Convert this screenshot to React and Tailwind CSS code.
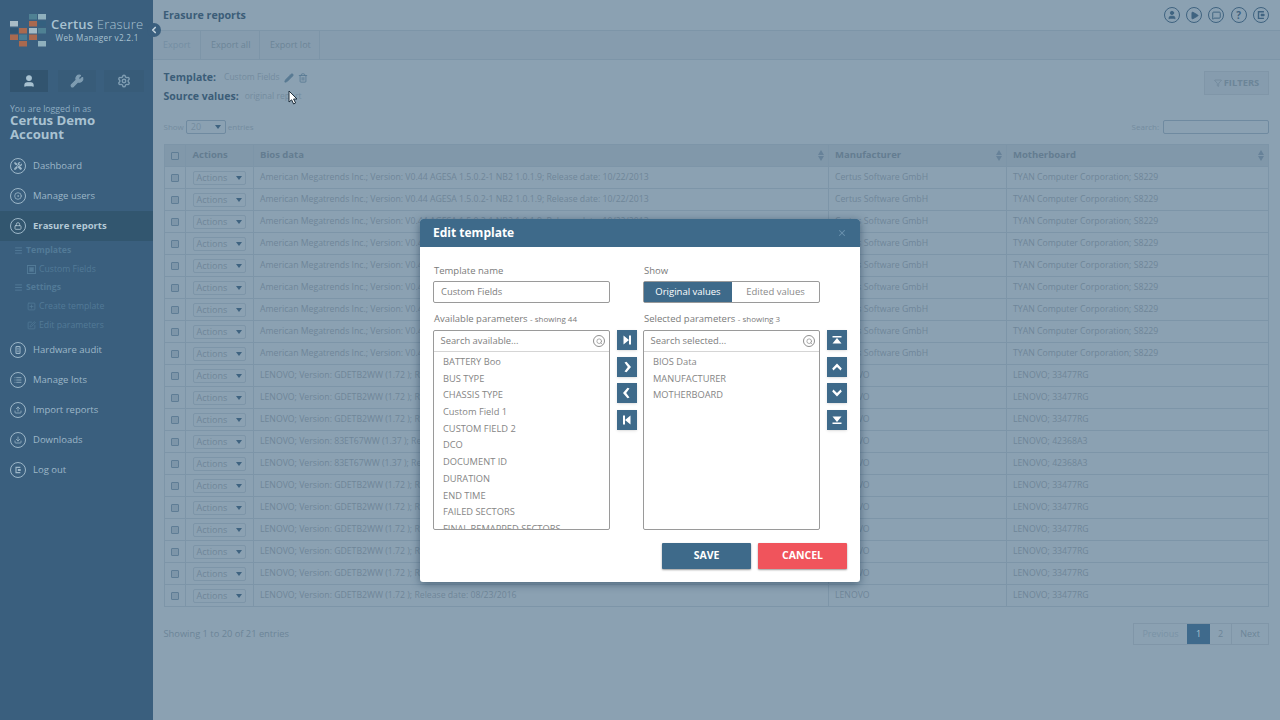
import React from 'react';
import {
  User, Wrench, Settings, CircleDot, Lock, List, Upload, Download, Pencil, Trash2,
  Menu, SquarePlus, SquarePen, Search, X, ChevronLeft, Play, MessageSquare, Filter,
} from 'lucide-react';
import { FaTools } from 'react-icons/fa';

const american = 'American Megatrends Inc.; Version: V0.44 AGESA 1.5.0.2-1 NB2 1.0.1.9; Release date: 10/22/2013';
const lenovo = 'LENOVO; Version: GDETB2WW (1.72 ); Release date: 08/23/2016';
const lenovo2 = 'LENOVO; Version: 83ET67WW (1.37 ); Release date: 08/23/2016';

const rows = [
  ...Array(9).fill({ bios: american, man: 'Certus Software GmbH', board: 'TYAN Computer Corporation; S8229' }),
  ...Array(3).fill({ bios: lenovo, man: 'LENOVO', board: 'LENOVO; 33477RG' }),
  ...Array(2).fill({ bios: lenovo2, man: 'LENOVO', board: 'LENOVO; 42368A3' }),
  ...Array(6).fill({ bios: lenovo, man: 'LENOVO', board: 'LENOVO; 33477RG' }),
];

// small drawn icons the packages have no close match for
const TowerIcon = ({ size = 9 }) => (
  <svg width={size} height={size} viewBox="0 0 12 12" fill="none" stroke="currentColor" strokeWidth="1.6">
    <rect x="3" y="0.8" width="6" height="10.4" rx="1" />
    <path d="M5 3.5h2M5 6h2M5 8.5h2" />
  </svg>
);

const ExitIcon = ({ size = 9 }) => (
  <svg width={size} height={size} viewBox="0 0 12 12" fill="none" stroke="currentColor" strokeWidth="1.7">
    <path d="M9.5 2H3v8h6.5" />
    <path d="M5.5 6h5" />
    <path d="M6 4.5h3.5v3H6z" fill="currentColor" stroke="none" />
  </svg>
);

const ArrowGlyph = ({ d }) => (
  <svg width="12" height="12" viewBox="0 0 12 12" fill="white"><path d={d} /></svg>
);

const arrows = {
  last: 'M2.5 1.5 L8 6 L2.5 10.5 Z M8 1.5 H10 V10.5 H8 Z',
  right: 'M3.5 1.5 L5.5 0.8 L10 6 L5.5 11.2 L3.5 10.5 L6.8 6 Z',
  left: 'M8.5 1.5 L6.5 0.8 L2 6 L6.5 11.2 L8.5 10.5 L5.2 6 Z',
  first: 'M9.5 1.5 L4 6 L9.5 10.5 Z M2 1.5 H4 V10.5 H2 Z',
  top: 'M1.5 2 H10.5 V3.5 H1.5 Z M6 4 L10.5 9.5 H1.5 Z',
  up: 'M1.2 7.5 L6 2.5 L10.8 7.5 L9.6 9.5 L6 6 L2.4 9.5 Z',
  down: 'M1.2 4.5 L6 9.5 L10.8 4.5 L9.6 2.5 L6 6 L2.4 2.5 Z',
  bottom: 'M1.5 10 H10.5 V8.5 H1.5 Z M6 8 L10.5 2.5 H1.5 Z',
};

const navTop = [
  { label: 'Dashboard', icon: FaTools },
  { label: 'Manage users', icon: CircleDot },
];
const navBottom = [
  { label: 'Hardware audit', icon: TowerIcon },
  { label: 'Manage lots', icon: List },
  { label: 'Import reports', icon: Upload },
  { label: 'Downloads', icon: Download },
  { label: 'Log out', icon: ExitIcon },
];

const available = ['BATTERY Boo', 'BUS TYPE', 'CHASSIS TYPE', 'Custom Field 1', 'CUSTOM FIELD 2', 'DCO', 'DOCUMENT ID', 'DURATION', 'END TIME', 'FAILED SECTORS', 'FINAL REMAPPED SECTORS'];
const selected = ['BIOS Data', 'MANUFACTURER', 'MOTHERBOARD'];

const Logo = () => (
  <svg width="38" height="34" viewBox="0 0 38 34" className="shrink-0">
    <rect x="19" y="0" width="8" height="5.5" fill="#4f8193" />
    <rect x="28" y="0" width="8" height="5.5" fill="#8fb0bd" />
    <rect x="0" y="7" width="8" height="5.5" fill="#a9bcc6" />
    <rect x="19" y="7" width="8" height="5.5" fill="#a9694f" />
    <rect x="28" y="7" width="8" height="5.5" fill="#34607f" />
    <rect x="0" y="14" width="8" height="5.5" fill="#2f5573" />
    <rect x="9" y="14" width="8" height="5.5" fill="#a9694f" />
    <rect x="19" y="14" width="8" height="5.5" fill="#a3bac5" />
    <rect x="28" y="14" width="8" height="5.5" fill="#4f8193" />
    <rect x="0" y="20.5" width="8" height="5.5" fill="#a9694f" />
    <rect x="9" y="20.5" width="8" height="5.5" fill="#4a7c93" />
    <rect x="19" y="20.5" width="8" height="5.5" fill="#a9694f" />
    <rect x="9" y="27" width="8" height="5.5" fill="#a9694f" />
    <rect x="28" y="27" width="8" height="5.5" fill="#8fb0bd" />
  </svg>
);

const NavItem = ({ label, icon: Icon, active }) => (
  <div className={`flex items-center h-[30px] pl-[10px] gap-[7px] ${active ? 'bg-[#32566f] font-bold text-[#b4c9d6]' : 'text-[#9db7c8]'}`}>
    <span className="flex items-center justify-center w-4 h-4 rounded-full border-[1.5px] border-[#9db7c8]">
      <Icon size={8} strokeWidth={2.4} />
    </span>
    <span className="text-[9.5px]">{label}</span>
  </div>
);

const SubHead = ({ label }) => (
  <div className="flex items-center h-[18.75px] pl-[14px] gap-[3px] text-[#527a97] text-[8.7px] font-bold">
    <Menu size={9} strokeWidth={2.5} />
    <span>{label}</span>
  </div>
);

const SubItem = ({ label, icon: Icon }) => (
  <div className="flex items-center h-[18.75px] pl-[27px] gap-[3px] text-[#527a97] text-[8.7px]">
    <Icon size={9} />
    <span>{label}</span>
  </div>
);

const Sidebar = () => (
  <aside className="w-[153px] shrink-0 bg-[#3a5f7e] relative">
    <div className="flex items-start pl-[10px] pt-[14px] h-[55px] gap-[3px]">
      <Logo />
      <div className="text-[#a9c2d1] leading-none pt-[4px]">
        <div className="text-[13px] whitespace-nowrap tracking-[0.2px]">
          <span className="font-semibold">Certus</span> <span className="font-light">Erasure</span>
        </div>
        <div className="text-[8.2px] text-center mt-[3px] whitespace-nowrap tracking-[0.3px]">Web Manager v2.2.1</div>
      </div>
    </div>
    <span className="absolute left-[147px] top-[23px] w-[14px] h-[14px] rounded-full bg-[#3a5f7e] flex items-center justify-center text-[#c6d6e0]">
      <ChevronLeft size={10} strokeWidth={4} />
    </span>
    <div className="flex pl-[10px] mt-[15px] text-[#7f9db2]">
      <span className="w-[38px] h-[22px] bg-[#32546f] flex items-center justify-center text-[#a9c2d1]"><User size={14} fill="currentColor" /></span>
      <span className="w-[38px] h-[22px] ml-[10px] bg-[#385c79] flex items-center justify-center"><Wrench size={14} fill="currentColor" /></span>
      <span className="w-[40px] h-[22px] ml-[8px] bg-[#385c79] flex items-center justify-center"><Settings size={14} strokeWidth={2.4} /></span>
    </div>
    <div className="pl-[10px] mt-[11px] text-[#8dabc0] text-[8.7px] leading-[12px]">You are logged in as</div>
    <div className="pl-[10px] pr-2 -mt-[1px] text-[#a9c2d1] text-[13.2px] font-bold leading-[13.5px]">Certus Demo Account</div>
    <nav className="mt-[10px]">
      {navTop.map((n) => <NavItem key={n.label} {...n} />)}
      <NavItem label="Erasure reports" icon={Lock} active />
      <SubHead label="Templates" />
      <SubItem label="Custom Fields" icon={({ size }) => (
        <svg width={size} height={size} viewBox="0 0 10 10" fill="currentColor"><path d="M0 0h10v10H0z M1 1v8h8V1z M2.5 2.5h5v5h-5z" fillRule="evenodd" /></svg>
      )} />
      <SubHead label="Settings" />
      <SubItem label="Create template" icon={SquarePlus} />
      <SubItem label="Edit parameters" icon={SquarePen} />
      {navBottom.map((n) => <NavItem key={n.label} {...n} />)}
    </nav>
  </aside>
);

const HeaderIcon = ({ children }) => (
  <span className="flex items-center justify-center w-4 h-4 rounded-full border-[1.5px] border-[#3f6380] text-[#3f6380] text-[10px] font-bold">
    {children}
  </span>
);

const SortArrows = () => (
  <span className="absolute right-[4px] top-[5px] flex flex-col gap-[1px] text-[#678299]">
    <span className="w-0 h-0 border-x-[3.5px] border-x-transparent border-b-[5px] border-b-current" />
    <span className="w-0 h-0 border-x-[3.5px] border-x-transparent border-t-[5px] border-t-current" />
  </span>
);

const Caret = () => (
  <span className="w-0 h-0 border-x-[3.5px] border-x-transparent border-t-[4px] border-t-[#3f6380]" />
);

const Main = () => (
  <main className="flex-1 min-w-0 bg-[#8ba1b2]">
    <header className="h-[31px] border-b border-[#7d95a8] flex items-center justify-between pl-[10px] pr-[11px]">
      <h1 className="text-[10.7px] font-bold text-[#3b5d78]">Erasure reports</h1>
      <div className="flex gap-[6.3px]">
        <HeaderIcon><User size={10} fill="currentColor" /></HeaderIcon>
        <HeaderIcon><Play size={9} fill="currentColor" /></HeaderIcon>
        <HeaderIcon><MessageSquare size={9} strokeWidth={2.6} /></HeaderIcon>
        <HeaderIcon>?</HeaderIcon>
        <HeaderIcon><ExitIcon size={10} /></HeaderIcon>
      </div>
    </header>
    <div className="h-[29px] border-b border-[#7d95a8] bg-[#869cae] flex text-[9px] text-[#6c8598]">
      <span className="w-[48px] pl-[10px] border-r border-[#7d95a8] flex items-center text-[#748ea3]">Export</span>
      <span className="w-[59px] pl-[10px] border-r border-[#7d95a8] flex items-center">Export all</span>
      <span className="w-[60px] pl-[10px] border-r border-[#7d95a8] flex items-center">Export lot</span>
    </div>
    <div className="relative pl-[10.5px] pr-[11px] pt-[8px]">
      <div className="flex items-center h-[19px] gap-[8px] text-[#3b5d78] text-[10.5px] font-bold">
        Template:
        <span className="flex items-center text-[8.5px] font-normal text-[#748c9f]">
          Custom Fields
          <Pencil size={10} className="ml-[4px] text-[#587a93]" fill="currentColor" />
          <Trash2 size={10} className="ml-[4px] text-[#587a93]" />
        </span>
      </div>
      <div className="flex items-center h-[19px] gap-[6px] text-[#3b5d78] text-[10.5px] font-bold">
        Source values:
        <span className="text-[8.5px] font-normal text-[#748c9f]">original report</span>
      </div>
      <button className="absolute right-[11px] top-[11px] w-[65px] h-[24px] border border-[#8096a8] bg-[#869cae] flex items-center justify-center gap-[2px] text-[9.4px] font-bold text-[#6c8598]">
        <Filter size={8} /> FILTERS
      </button>
      <div className="flex items-center justify-between mt-[13px] h-[15px] text-[8px] text-[#748c9f]">
        <div className="flex items-center gap-[2px]">
          Show
          <span className="w-[40px] h-[14px] border border-[#6f8aa0] rounded-[2px] flex items-center justify-between px-[4px] text-[9px]">
            20 <Caret />
          </span>
          entries
        </div>
        <div className="flex items-center gap-[4px]">
          Search:
          <span className="w-[106px] h-[14px] border border-[#6f8aa0] rounded-[2px]" />
        </div>
      </div>
      <table className="w-[1105px] table-fixed border-collapse mt-[10px] text-[8.7px] text-[#6f8699]">
        <colgroup>
          <col className="w-[21px]" />
          <col className="w-[68px]" />
          <col className="w-[575px]" />
          <col className="w-[178px]" />
          <col />
        </colgroup>
        <thead>
          <tr className="h-[22px] bg-[#8198aa] text-left text-[9.5px] text-[#647d91] font-bold">
            <th className="border border-[#7d95a8] px-[6px]"><span className="block w-[8px] h-[8px] border border-[#5f7d95] rounded-[1px]" /></th>
            <th className="border border-[#7d95a8] px-[7px]">Actions</th>
            <th className="relative border border-[#7d95a8] px-[6.5px]">Bios data<SortArrows /></th>
            <th className="relative border border-[#7d95a8] px-[6.5px]">Manufacturer<SortArrows /></th>
            <th className="relative border border-[#7d95a8] px-[6.5px]">Motherboard<SortArrows /></th>
          </tr>
        </thead>
        <tbody>
          {rows.map((r, i) => (
            <tr key={i} className="h-[22px]">
              <td className="border border-[#7d95a8] px-[6px]"><span className="block w-[8px] h-[8px] border border-[#5f7d95] bg-[#7d95a8] rounded-[1px]" /></td>
              <td className="border border-[#7d95a8] px-[7px]">
                <span className="w-[53px] h-[14px] border border-[#7d95a8] rounded-[2px] flex items-center justify-between px-[3px] text-[9px]">
                  Actions <Caret />
                </span>
              </td>
              <td className="border border-[#7d95a8] px-[6.5px] whitespace-nowrap overflow-hidden">{r.bios}</td>
              <td className="border border-[#7d95a8] px-[6.5px] whitespace-nowrap overflow-hidden">{r.man}</td>
              <td className="border border-[#7d95a8] px-[6.5px] whitespace-nowrap overflow-hidden">{r.board}</td>
            </tr>
          ))}
        </tbody>
      </table>
      <div className="flex items-center justify-between mt-[16px] text-[9.3px] text-[#6c8598]">
        <span>Showing 1 to 20 of 21 entries</span>
        <div className="flex h-[22px] border border-[#8096a8] items-stretch text-[9px]">
          <span className="w-[53px] flex items-center justify-center text-[#7a93a6]">Previous</span>
          <span className="w-[23px] flex items-center justify-center bg-[#3f6a8c] text-[#a9c2d1]">1</span>
          <span className="w-[21px] flex items-center justify-center">2</span>
          <span className="w-[37px] flex items-center justify-center border-l border-[#8096a8]">Next</span>
        </div>
      </div>
    </div>
  </main>
);

const ArrowBtn = ({ d }) => (
  <button className="w-5 h-5 bg-[#3e6a8a] flex items-center justify-center shadow-sm">
    <ArrowGlyph d={d} />
  </button>
);

const ParamBox = ({ placeholder, items }) => (
  <div className="w-[177px] h-[200px] border border-[#9a9a9a] rounded-[2px] flex flex-col overflow-hidden">
    <div className="h-[21px] shrink-0 border-b border-[#d5d5d5] flex items-center justify-between pl-[6.5px] pr-[4px] text-[9.4px] text-[#7e7e7e]">
      {placeholder}
      <span className="w-[12px] h-[12px] rounded-full border border-[#8f8f8f] flex items-center justify-center text-[#8f8f8f]"><Search size={7} strokeWidth={2.5} /></span>
    </div>
    <ul className="pl-[9px] pt-[2px] text-[9.3px] text-[#858585] overflow-hidden">
      {items.map((it) => <li key={it} className="h-[16.7px] leading-[16.7px] whitespace-nowrap">{it}</li>)}
    </ul>
  </div>
);

const Modal = () => (
  <div className="absolute inset-0 flex flex-col items-center pt-[219px]">
    <div className="w-[440px] h-[363px] bg-white rounded-[3px] shadow-[0_2px_8px_rgba(20,50,75,0.55)] overflow-hidden">
      <div className="h-[28px] bg-[#3e6a8a] flex items-center justify-between pl-[13px] pr-[13px]">
        <h2 className="text-[12px] font-bold text-white">Edit template</h2>
        <X size={10} className="text-[#6b92ad]" strokeWidth={2.5} />
      </div>
      <div className="px-[13px] pt-[18px]">
        <div className="flex justify-between pr-[27px]">
          <div>
            <label className="block pl-[1px] text-[9.5px] text-[#7a7a7a] leading-[12px] mb-[4px]">Template name</label>
            <div className="w-[177px] h-[22px] border border-[#9a9a9a] rounded-[2px] flex items-center px-[7px] text-[9.4px] text-[#7e7e7e]">Custom Fields</div>
          </div>
          <div className="w-[177px]">
            <label className="block pl-[1px] text-[9.5px] text-[#7a7a7a] leading-[12px] mb-[4px]">Show</label>
            <div className="h-[22px] border border-[#9a9a9a] rounded-[2px] flex text-[9.5px]">
              <span className="w-[88px] bg-[#3e6a8a] text-white flex items-center justify-center">Original values</span>
              <span className="flex-1 text-[#8a8a8a] flex items-center justify-center">Edited values</span>
            </div>
          </div>
        </div>
        <div className="flex mt-[10px]">
          <div>
            <div className="pl-[1px] text-[9.5px] text-[#7a7a7a] leading-[12px] mb-[5px]">Available parameters <span className="text-[8px]">- showing 44</span></div>
            <ParamBox placeholder="Search available..." items={available} />
          </div>
          <div className="w-[20px] ml-[7px] mt-[17px] flex flex-col gap-[6.5px]">
            <ArrowBtn d={arrows.last} />
            <ArrowBtn d={arrows.right} />
            <ArrowBtn d={arrows.left} />
            <ArrowBtn d={arrows.first} />
          </div>
          <div className="ml-[6px]">
            <div className="pl-[1px] text-[9.5px] text-[#7a7a7a] leading-[12px] mb-[5px]">Selected parameters <span className="text-[8px]">- showing 3</span></div>
            <ParamBox placeholder="Search selected..." items={selected} />
          </div>
          <div className="w-[20px] ml-[7px] mt-[17px] flex flex-col gap-[6.5px]">
            <ArrowBtn d={arrows.top} />
            <ArrowBtn d={arrows.up} />
            <ArrowBtn d={arrows.down} />
            <ArrowBtn d={arrows.bottom} />
          </div>
        </div>
        <div className="flex justify-end gap-[7px] mt-[13px]">
          <button className="w-[89px] h-[26px] bg-[#3e6a8a] text-white text-[10.5px] font-bold rounded-[1px] shadow-[0_1px_2px_rgba(0,0,0,0.4)]">SAVE</button>
          <button className="w-[89px] h-[26px] bg-[#f0545c] text-white text-[10.5px] font-bold rounded-[1px] shadow-[0_1px_2px_rgba(0,0,0,0.4)]">CANCEL</button>
        </div>
      </div>
    </div>
  </div>
);

const Cursor = () => (
  <svg width="12" height="16" viewBox="0 0 12 16" className="absolute left-[288px] top-[90px]">
    <path d="M1 1 L1 12 L3.6 9.8 L5.6 14 L7.6 13 L5.6 9 L9 9 Z" fill="#fff" stroke="#1d2d3a" strokeWidth="1" />
  </svg>
);

export default function App() {
  return (
    <div className="relative flex w-[1280px] h-[720px] overflow-hidden" style={{ fontFamily: '"Open Sans", sans-serif' }}>
      <Sidebar />
      <Main />
      <Cursor />
      <Modal />
    </div>
  );
}
